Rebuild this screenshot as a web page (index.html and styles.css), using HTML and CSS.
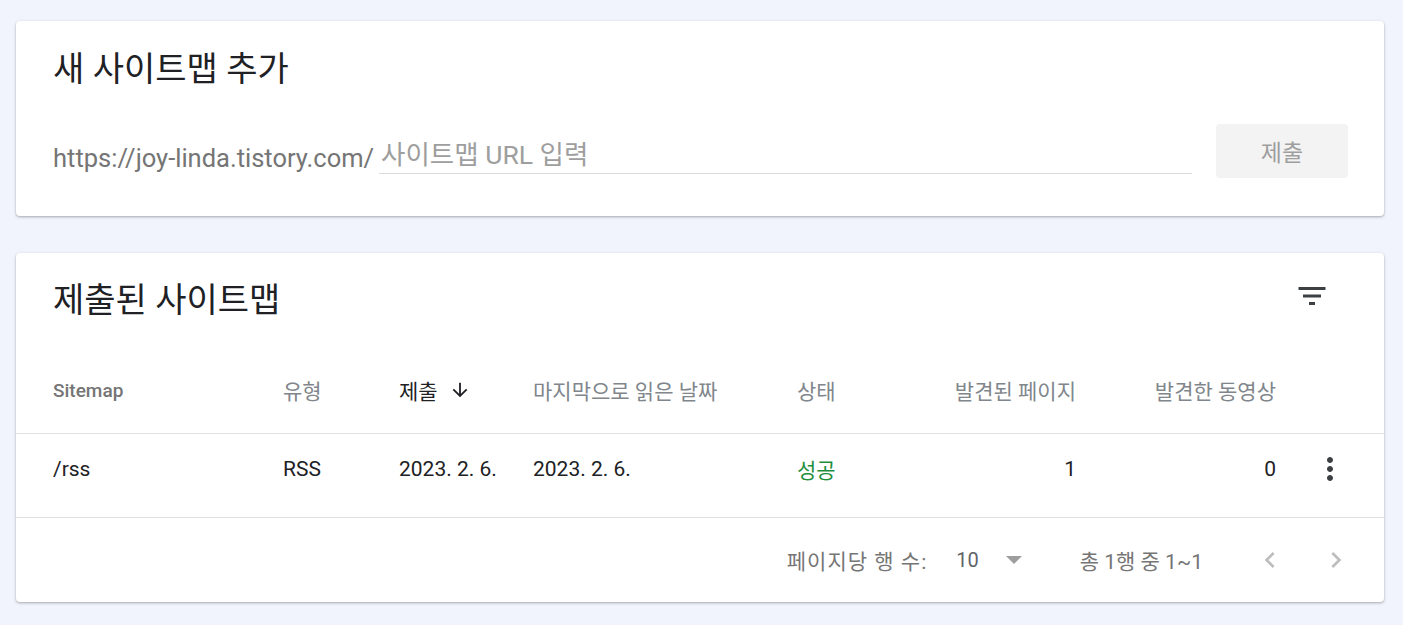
FILE: index.html
```html
<!DOCTYPE html>
<html lang="ko">
<head>
  <meta charset="UTF-8" />
  <meta name="viewport" content="width=device-width, initial-scale=1.0" />
  <title>Sitemaps</title>
  <link rel="stylesheet" href="styles.css">
</head>
<body>
  <!-- 새 사이트맵 추가 -->
  <section class="card add-card">
    <h2 class="card-title add-title">새 사이트맵 추가</h2>
    <div class="add-row">
      <div class="field">
        <span class="prefix">https://joy-linda.tistory.com/</span>
        <span class="input">사이트맵 URL 입력</span>
      </div>
      <button class="submit-btn">제출</button>
    </div>
  </section>

  <!-- 제출된 사이트맵 -->
  <section class="card list-card">
    <div class="list-head">
      <h2 class="card-title">제출된 사이트맵</h2>
      <svg class="filter-icon" viewBox="0 0 24 24" width="36" height="36">
        <path d="M10 18h4v-2h-4v2zM3 6v2h18V6H3zm3 7h12v-2H6v2z" fill="#3c4043"/>
      </svg>
    </div>

    <div class="row head-row">
      <div class="cell th strong">Sitemap</div>
      <div class="cell th">유형</div>
      <div class="cell th sorted">제출
        <svg viewBox="0 0 24 24" width="22" height="22">
          <path d="M20 12l-1.41-1.41L13 16.17V4h-2v12.17l-5.58-5.59L4 12l8 8 8-8z" fill="#202124"/>
        </svg>
      </div>
      <div class="cell th">마지막으로 읽은 날짜</div>
      <div class="cell th">상태</div>
      <div class="cell th num">발견된 페이지</div>
      <div class="cell th num">발견한 동영상</div>
      <div class="cell"></div>
    </div>

    <div class="row body-row">
      <div class="cell">/rss</div>
      <div class="cell">RSS</div>
      <div class="cell">2023. 2. 6.</div>
      <div class="cell">2023. 2. 6.</div>
      <div class="cell ok">성공</div>
      <div class="cell num">1</div>
      <div class="cell num">0</div>
      <div class="cell menu">
        <svg viewBox="0 0 24 24" width="36" height="36">
          <path d="M12 8c1.1 0 2-.9 2-2s-.9-2-2-2-2 .9-2 2 .9 2 2 2zm0 2c-1.1 0-2 .9-2 2s.9 2 2 2 2-.9 2-2-.9-2-2-2zm0 6c-1.1 0-2 .9-2 2s.9 2 2 2 2-.9 2-2-.9-2-2-2z" fill="#3c4043"/>
        </svg>
      </div>
    </div>

    <div class="pager">
      <span class="pager-label">페이지당 행 수:</span>
      <span class="per-page">10</span>
      <span class="caret"></span>
      <span class="range">총 1행 중 1~1</span>
      <svg class="chev" viewBox="0 0 24 24" width="32" height="32">
        <path d="M15.41 7.41L14 6l-6 6 6 6 1.41-1.41L10.83 12z" fill="#bdbdbd"/>
      </svg>
      <svg class="chev" viewBox="0 0 24 24" width="32" height="32">
        <path d="M10 6L8.59 7.41 13.17 12l-4.58 4.59L10 18l6-6z" fill="#bdbdbd"/>
      </svg>
    </div>
  </section>
</body>
</html>
```

FILE: styles.css
```css
body {
  margin: 0;
  padding: 21px 19px 24px 16px;
  background: #f1f4fc;
  font-family: Roboto, "Noto Sans CJK KR", sans-serif;
  color: #212121;
  display: flex;
  flex-direction: column;
  gap: 37px;
}

.card {
  background: #fff;
  border-radius: 4px;
  box-shadow: 0 1px 3px rgba(60, 64, 67, 0.3), 0 1px 2px rgba(60, 64, 67, 0.15);
}

.card-title {
  margin: 0;
  font-size: 34px;
  font-weight: 400;
  color: #202124;
  line-height: 40px;
}

/* 새 사이트맵 추가 */
.add-card {
  padding: 28px 36px 31px 37px;
}

.add-title {
  height: 68px;
}

.add-row {
  display: flex;
  align-items: center;
  gap: 24px;
  height: 68px;
}

.field {
  flex: 1;
  display: flex;
  align-items: flex-end;
  height: 54px;
}

.prefix {
  font-size: 25.5px;
  color: #757575;
  line-height: 30px;
  padding-bottom: 5px;
  margin-right: 5px;
}

.input {
  flex: 1;
  font-size: 26.5px;
  color: #9e9e9e;
  line-height: 30px;
  padding: 0 0 3px 2px;
  border-bottom: 1px solid #dadce0;
  margin-bottom: 4px;
}

.submit-btn {
  width: 132px;
  height: 54px;
  border: none;
  border-radius: 4px;
  background: #f3f3f3;
  color: #9e9e9e;
  font-family: inherit;
  font-size: 23px;
}

/* 제출된 사이트맵 */
.list-head {
  display: flex;
  align-items: center;
  justify-content: space-between;
  height: 94px;
  padding: 0 54px 0 37px;
}

.filter-icon {
  margin-top: -8px;
}

.row {
  display: grid;
  grid-template-columns: 230px 116px 134px 264px 120px 159px 200px 108px;
  align-items: center;
  padding-left: 37px;
  border-bottom: 1px solid #e0e0e0;
}

.head-row {
  height: 86px;
  font-size: 21px;
  color: #80868b;
  white-space: nowrap;
}

.th.strong {
  font-size: 19px;
  font-weight: 500;
  color: #757575;
}

.th.sorted {
  display: flex;
  align-items: center;
  gap: 11px;
  color: #202124;
}

.body-row {
  height: 69px;
  padding-bottom: 14px;
  font-size: 21px;
  color: #202124;
}

.num {
  text-align: right;
}

.ok {
  color: #1e8e3e;
}

.menu {
  display: flex;
  justify-content: center;
}

.pager {
  display: flex;
  align-items: center;
  justify-content: flex-end;
  height: 84px;
  padding-right: 32px;
  font-size: 21px;
  color: #757575;
}

.pager-label {
  letter-spacing: 1px;
}

.per-page {
  margin-left: 29px;
  font-size: 20px;
  color: #5f6368;
}

.caret {
  margin-left: 27px;
  width: 0;
  height: 0;
  border-left: 8px solid transparent;
  border-right: 8px solid transparent;
  border-top: 8px solid #9e9e9e;
}

.range {
  margin-left: 58px;
  margin-right: 51px;
}

.chev + .chev {
  margin-left: 34px;
}
```
